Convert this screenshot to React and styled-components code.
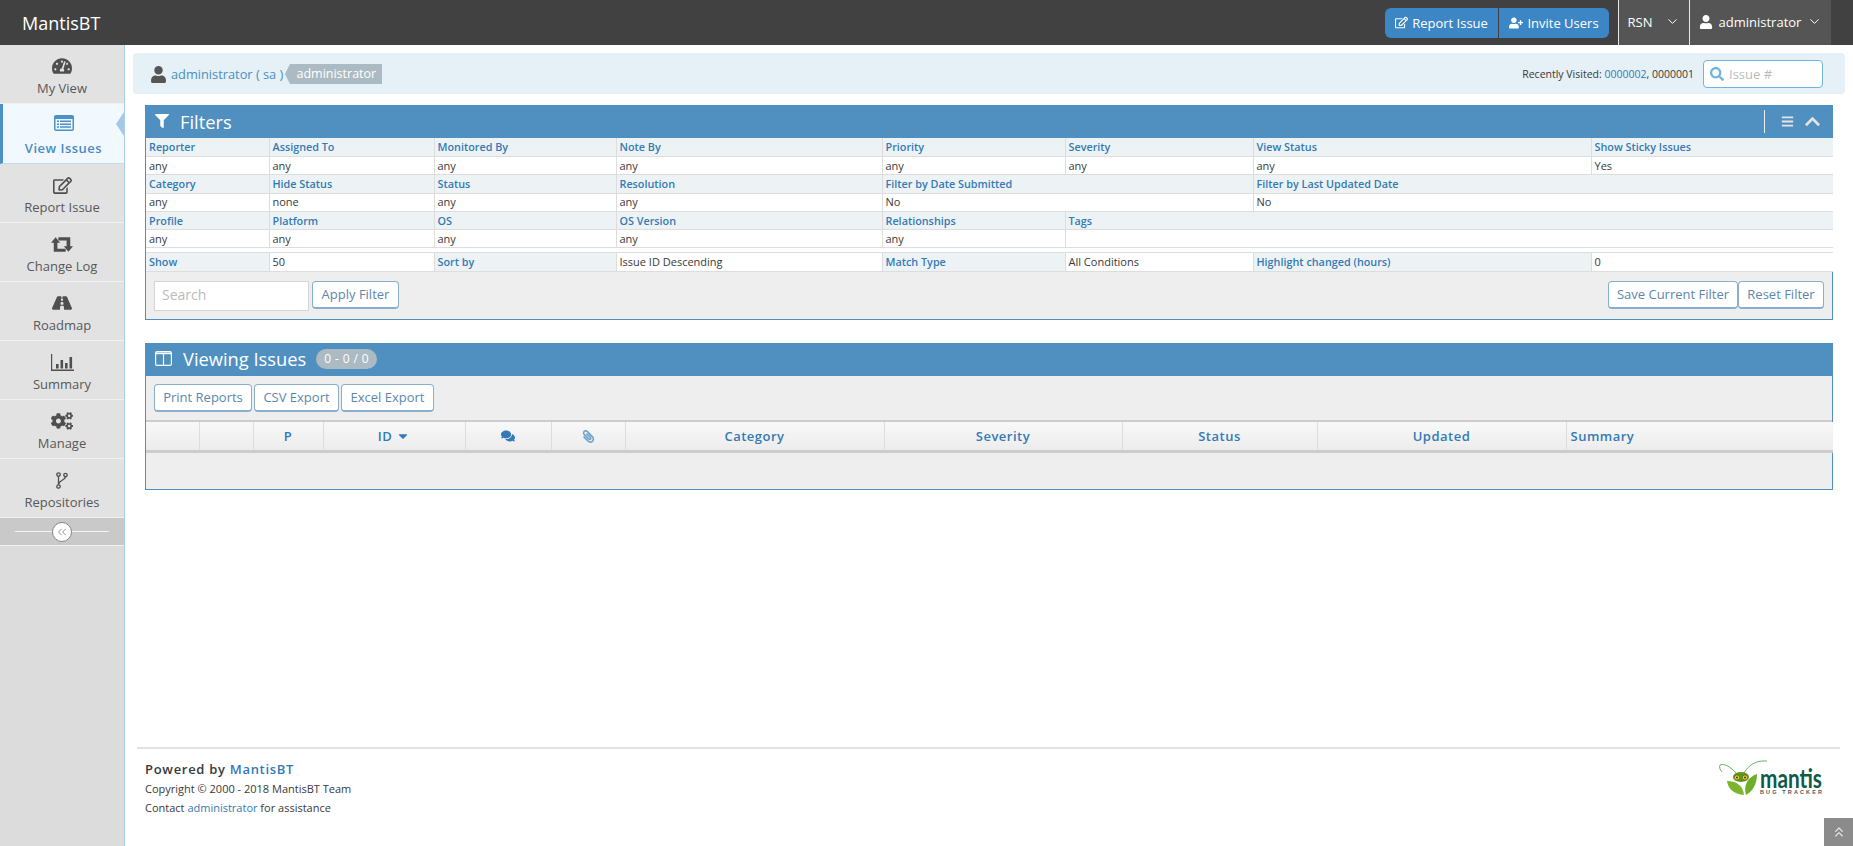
import React from "react";
import styled, { createGlobalStyle } from "styled-components";
import {
  FaTachometerAlt,
  FaRegEdit,
  FaRoad,
  FaCogs,
  FaUser,
  FaFilter,
  FaBars,
  FaChevronUp,
  FaSearch,
  FaUserPlus,
  FaCaretDown,
  FaComments,
  FaPaperclip,
} from "react-icons/fa";
import { ChevronDown, ChevronsLeft, ChevronsUp } from "lucide-react";

const Global = createGlobalStyle`
  html, body {
    margin: 0;
    height: 100%;
    overflow: hidden;
    background: #fff;
    font-family: "Open Sans", "Liberation Sans", sans-serif;
    font-size: 13px;
    color: #393939;
  }
  * { box-sizing: border-box; }
  a { color: #337ab7; text-decoration: none; }
`;

const Navbar = styled.header`
  height: 45px;
  background: #414141;
  display: flex;
  align-items: center;
  padding-right: 22px;
`;

const Brand = styled.div`
  margin-left: 22px;
  color: #fff;
  font-size: 18px;
  margin-right: auto;
`;

const NavGroup = styled.div`
  display: flex;
  gap: 1px;
  margin-right: 9px;
`;

const NavButton = styled.button`
  height: 30px;
  width: ${(p) => p.$w}px;
  border: 0;
  padding: 0;
  background: #3d86c6;
  color: #fff;
  font: 13px "Open Sans", sans-serif;
  display: flex;
  align-items: center;
  justify-content: center;
  gap: 4px;
  border-radius: ${(p) => (p.$left ? "6px 0 0 6px" : "0 6px 6px 0")};
`;

const NavItem = styled.div`
  height: 45px;
  width: ${(p) => p.$w}px;
  background: #555;
  border-left: 1px solid #e8e8e8;
  color: #fff;
  display: flex;
  align-items: center;
  justify-content: center;
  gap: ${(p) => p.$gap}px;
  padding-bottom: 2px;
`;

const Layout = styled.div`
  display: flex;
  height: calc(100vh - 45px);
`;

const Sidebar = styled.nav`
  width: 125px;
  flex: none;
  background: #dcdcdc;
  border-right: 1px solid #a8cbe6;
`;

const MenuItem = styled.a`
  position: relative;
  display: flex;
  flex-direction: column;
  align-items: center;
  height: ${(p) => (p.$active ? 60 : 59)}px;
  padding-top: ${(p) => (p.$active ? 9 : 11)}px;
  background: ${(p) => (p.$active ? "#f1f9ff" : "#e2e2e2")};
  border-bottom: 1px solid ${(p) => (p.$active ? "#c4dced" : "#f0f0f0")};
  border-left: ${(p) => (p.$active ? "3px solid #4c90c6" : "0")};
  color: ${(p) => (p.$active ? "#4b8ac0" : "#585858")};
  font-weight: ${(p) => (p.$active ? 600 : 400)};
  letter-spacing: ${(p) => (p.$active ? 0.5 : 0)}px;
  font-size: 13px;
  line-height: 18px;

  ${(p) =>
    p.$active &&
    `&::after {
      content: "";
      position: absolute;
      right: 0;
      top: 8px;
      border: 12px solid transparent;
      border-left: 0;
      border-right: 8px solid #a5c9e4;
    }`}
`;

const MenuIcon = styled.span`
  height: 20px;
  margin-bottom: ${(p) => (p.$active ? 6 : 3)}px;
  display: flex;
  align-items: center;
  color: ${(p) => (p.$active ? "#4c90c6" : "#4f4f4f")};
`;

const Collapse = styled.div`
  height: 28px;
  background: #c9c9c9;
  border-bottom: 1px solid #f0f0f0;
  display: flex;
  align-items: center;
  justify-content: center;
  position: relative;

  &::before {
    content: "";
    position: absolute;
    left: 15px;
    right: 15px;
    top: 13px;
    border-top: 1px solid #f4f4f4;
  }
`;

const CollapseButton = styled.span`
  position: relative;
  width: 20px;
  height: 20px;
  border-radius: 50%;
  background: #fff;
  border: 1px solid #888;
  color: #777;
  display: flex;
  align-items: center;
  justify-content: center;
`;

const Content = styled.main`
  flex: 1;
  min-width: 0;
  display: flex;
  flex-direction: column;
`;

const Breadcrumbs = styled.div`
  height: 41px;
  margin: 8px 8px 0;
  background: #e5f0f7;
  border-radius: 4px;
  display: flex;
  align-items: center;
  padding: 0 22px 0 17px;
`;

const CrumbUser = styled.a`
  display: flex;
  align-items: center;
  gap: 4px;
  color: #4c8fbd;
  font-size: 12.8px;
  svg { color: #555; font-size: 17px; margin-top: 1px; }
`;

const RoleLabel = styled.span`
  position: relative;
  margin-left: 7px;
  margin-right: auto;
  height: 20px;
  width: 92px;
  background: #abbac3;
  color: #fff;
  font-size: 12.5px;
  display: flex;
  align-items: center;
  justify-content: center;

  &::before {
    content: "";
    position: absolute;
    left: -5px;
    top: 0;
    border: 10px solid transparent;
    border-left: 0;
    border-right: 5px solid #abbac3;
  }
`;

const Recent = styled.span`
  font-size: 10.5px;
  margin-right: 9px;
`;

const IssueBox = styled.label`
  width: 120px;
  height: 28px;
  background: #fff;
  border: 1px solid #6fb3e0;
  border-radius: 4px;
  display: flex;
  align-items: center;
  gap: 5px;
  padding-left: 6px;
  color: #6fb3e0;
`;

const IssueInput = styled.input`
  border: 0;
  outline: 0;
  padding: 0;
  width: 80px;
  font: 13px "Open Sans", sans-serif;
  &::placeholder { color: #bbb; opacity: 1; }
`;

const Page = styled.div`
  padding: 11px 20px 0;
  display: flex;
  flex-direction: column;
  gap: 23px;
`;

const Widget = styled.section`
  border: 1px solid #5090c1;
  background: #eee;
`;

const WidgetHead = styled.div`
  height: 32px;
  margin: 0 -1px;
  background: #5090c1;
  color: #fff;
  display: flex;
  align-items: center;
  padding: 0 0 2px 10px;
  font-size: 18.3px;
`;

const HeadTitle = styled.span`
  margin-left: 11px;
`;

const HeadTools = styled.div`
  margin-left: auto;
  height: 23px;
  border-left: 1px solid #e8eff5;
  display: flex;
  align-items: center;
  gap: 10px;
  padding: 0 12px 0 16px;
  color: #e4e4e4;
`;

const Count = styled.span`
  margin-left: 10px;
  height: 20px;
  width: 61px;
  border-radius: 10px;
  background: #abbac3;
  font-size: 12px;
  letter-spacing: 0.4px;
  display: flex;
  align-items: center;
  justify-content: center;
`;

const FilterTable = styled.table`
  width: 100%;
  table-layout: fixed;
  border-collapse: collapse;
  font-size: 11px;
  line-height: 14px;
  background: #fff;
  border-bottom: 1px solid #ccc;
`;

const FilterLabel = styled.td`
  height: ${(p) => p.$h || 18}px;
  padding: ${(p) => (p.$nudge ? 1 : 0)}px 3px 0;
  background: #edf3f4;
  border: 1px solid #ddd;
  border-top: 0;
  color: #337ab7;
  font-size: 10.8px;
  font-weight: 600;
  white-space: nowrap;
  &:first-child { border-left: 0; }
  &:last-child { border-right: 0; }
`;

const FilterValue = styled.td`
  height: 18px;
  padding: ${(p) => (p.$nudge ? 1 : 0)}px 3px 0;
  background: #fff;
  border: 1px solid #ddd;
  border-top: 0;
  color: #393939;
  white-space: nowrap;
  &:first-child { border-left: 0; }
  &:last-child { border-right: 0; }
`;

const Spacer = styled.td`
  height: 5px;
  padding: 0;
  border-bottom: 1px solid #ddd;
`;

const FilterBar = styled.div`
  height: 47px;
  display: flex;
  align-items: flex-start;
  padding: 9px 8px 0;
`;

const SearchInput = styled.input`
  width: 155px;
  height: 30px;
  margin-right: 3px;
  border: 1px solid #d5d5d5;
  outline: 0;
  padding: 0 7px 2px;
  color: #858585;
  font: 14px "Open Sans", sans-serif;
  &::placeholder { color: #bbb; opacity: 1; }
`;

const Btn = styled.button`
  height: 28px;
  width: ${(p) => p.$w}px;
  flex: none;
  padding: 0;
  background: #fff;
  border: 1px solid #8aafce;
  border-bottom-width: 2px;
  border-radius: 4px;
  color: #5b87ad;
  font: 13px "Open Sans", sans-serif;
`;

const Push = styled.span`
  margin-left: auto;
`;

const ExportBar = styled.div`
  height: 46px;
  display: flex;
  align-items: flex-start;
  gap: 2px;
  padding: 8px 8px 0;
  border-bottom: 2px solid #ccc;
`;

const IssueTable = styled.table`
  width: 100%;
  table-layout: fixed;
  border-collapse: collapse;
  border-bottom: 3px solid #ccc;
`;

const HeadCell = styled.th`
  height: 30px;
  padding: 0 ${(p) => (p.$left ? 4 : 0)}px;
  background: linear-gradient(#f8f8f8, #ececec);
  border-right: 1px solid #ddd;
  border-bottom: 2px solid #e0e0e0;
  color: #337ab7;
  font-size: 13px;
  font-weight: 600;
  letter-spacing: 0.5px;
  text-align: ${(p) => (p.$left ? "left" : "center")};
  &:last-child { border-right: 0; }
  svg { vertical-align: -2px; }
`;

const ClipIcon = styled(FaPaperclip)`
  color: #6fa3cf;
  transform: scaleX(-1);
`;

const EmptyBody = styled.div`
  height: 36px;
`;

const Footer = styled.footer`
  margin: auto 13px 0 12px;
  height: 99px;
  border-top: 2px solid #e2e2e2;
  padding: 10px 8px 0;
  display: flex;
  justify-content: space-between;
`;

const FooterText = styled.div`
  font-size: 11px;
  line-height: 19px;
`;

const Powered = styled.div`
  font-size: 13px;
  font-weight: 600;
  letter-spacing: 0.7px;
  line-height: 20px;
`;

const Logo = styled.svg`
  width: 105px;
  height: 40px;
  margin: 1px 8px 0 0;
  overflow: visible;
`;

const ScrollTop = styled.a`
  position: fixed;
  right: 0;
  bottom: 0;
  width: 29px;
  height: 28px;
  background: #8b8b8b;
  color: #e4eef6;
  display: flex;
  align-items: center;
  justify-content: center;
`;

const ListIcon = () => (
  <svg viewBox="0 0 20 16" width="20" height="16">
    <rect width="20" height="16" rx="2" fill="currentColor" />
    <rect x="1.5" y="4" width="17" height="10.5" fill="#eaf5fd" />
    <path d="M3 5.5h2v1.6H3zM3 8.4h2V10H3zM3 11.2h2v1.6H3zM6 5.5h11v1.6H6zM6 8.4h11V10H6zM6 11.2h11v1.6H6z" fill="currentColor" />
  </svg>
);

const RetweetIcon = () => (
  <svg viewBox="0 0 24 16" width="22" height="15" fill="currentColor">
    <path d="M5 0l5 6H7v6.5h9V16H3V6H0z" />
    <path d="M19 16l-5-6h3V3.5H8V0h13v10h3z" />
  </svg>
);

// fa5 chart-bar is horizontal, the reference one stands up
const ChartIcon = () => (
  <svg viewBox="0 0 23 17" width="23" height="17" fill="currentColor">
    <path d="M0 0h1.2v15.6H23V17H0z" />
    <path d="M5 10h2.6v4.5H5zM9.5 6h2.6v8.5H9.5zM14 9h2.6v5.5H14zM18.5 3h2.6v11.5h-2.6z" />
  </svg>
);

const BranchIcon = () => (
  <svg viewBox="0 0 12 17" width="12" height="17" fill="none" stroke="currentColor" strokeWidth="1.3">
    <circle cx="2.5" cy="2.5" r="1.7" />
    <circle cx="9.5" cy="3" r="1.7" />
    <circle cx="2.5" cy="14.5" r="1.7" />
    <path d="M2.5 4.2v8.6M9.5 4.7C9.5 8 3.5 8 2.8 12" />
  </svg>
);

const ColumnsIcon = () => (
  <svg viewBox="0 0 17 15" width="17" height="15" fill="none" stroke="currentColor">
    <rect x="0.6" y="0.6" width="15.8" height="13.8" rx="1.5" strokeWidth="1.2" />
    <path d="M8.5 2v12" strokeWidth="1.2" />
    <path d="M1 2.4h15" strokeWidth="1.6" />
  </svg>
);

const MantisLogo = () => (
  <Logo viewBox="0 0 105 40">
    <path d="M17 13C12 7 5 3 1 5c-1 2 0 5 2 7" fill="none" stroke="#3f9a4a" strokeWidth="0.8" />
    <path d="M25 13C29 6 36 0 48 1" fill="none" stroke="#3f9a4a" strokeWidth="0.8" />
    <path d="M8 21C18 21 24 26 25 35C15 34 9 29 8 21Z" fill="#7ab52d" />
    <path d="M38 14C38 24 34 31 27 35C24 25 29 17 38 14Z" fill="#6fae2a" />
    <ellipse cx="22" cy="17" rx="8" ry="5" fill="#5b9a1f" />
    <circle cx="18" cy="17.5" r="2.6" fill="#f2d90f" stroke="#333" strokeWidth="0.5" />
    <circle cx="26" cy="17.5" r="2.6" fill="#f2d90f" stroke="#333" strokeWidth="0.5" />
    <circle cx="18" cy="17.5" r="0.9" fill="#222" />
    <circle cx="26" cy="17.5" r="0.9" fill="#222" />
    <text x="41" y="28" fontFamily="Lato, sans-serif" fontWeight="700" fontSize="27" fill="#0f5a47" textLength="62" lengthAdjust="spacingAndGlyphs">
      mantis
    </text>
    <text x="41" y="33.5" fontFamily="Liberation Sans, sans-serif" fontWeight="700" fontSize="5.5" fill="#555" textLength="62">
      BUG TRACKER
    </text>
  </Logo>
);

const MENU = [
  { label: "My View", icon: <FaTachometerAlt size={20} /> },
  { label: "View Issues", icon: <ListIcon />, active: true },
  { label: "Report Issue", icon: <FaRegEdit size={19} /> },
  { label: "Change Log", icon: <RetweetIcon /> },
  { label: "Roadmap", icon: <FaRoad size={20} /> },
  { label: "Summary", icon: <ChartIcon /> },
  { label: "Manage", icon: <FaCogs size={22} /> },
  { label: "Repositories", icon: <BranchIcon /> },
];

const FILTER_COLS = [123, 165, 182, 266, 183, 188, 338, 242];

// [text, colSpan]
const FILTER_ROWS = [
  {
    labels: [["Reporter"], ["Assigned To"], ["Monitored By"], ["Note By"], ["Priority"], ["Severity"], ["View Status"], ["Show Sticky Issues"]],
    values: [["any"], ["any"], ["any"], ["any"], ["any"], ["any"], ["any"], ["Yes"]],
    nudge: true,
  },
  {
    labels: [["Category"], ["Hide Status"], ["Status"], ["Resolution"], ["Filter by Date Submitted", 2], ["Filter by Last Updated Date", 2]],
    values: [["any"], ["none"], ["any"], ["any"], ["No", 2], ["No", 2]],
    tall: true,
  },
  {
    labels: [["Profile"], ["Platform"], ["OS"], ["OS Version"], ["Relationships"], ["Tags", 3]],
    values: [["any"], ["any"], ["any"], ["any"], ["any"], ["", 3]],
    nudge: true,
  },
];

const ISSUE_COLS = [53, 54, 70, 142, 86, 74, 259, 238, 195, 249, 267];

const Filters = () => (
  <Widget>
    <WidgetHead>
      <FaFilter size={14} />
      <HeadTitle>Filters</HeadTitle>
      <HeadTools>
        <FaBars size={13} />
        <FaChevronUp size={17} />
      </HeadTools>
    </WidgetHead>
    <FilterTable>
      <colgroup>
        {FILTER_COLS.map((w, i) => (
          <col key={i} style={{ width: w }} />
        ))}
      </colgroup>
      <tbody>
        {FILTER_ROWS.map((row, r) => (
          <React.Fragment key={r}>
            <tr>
              {row.labels.map(([text, span], i) => (
                <FilterLabel key={i} colSpan={span} $h={row.tall ? 19 : 18} $nudge={row.nudge}>
                  {text}
                </FilterLabel>
              ))}
            </tr>
            <tr>
              {row.values.map(([text, span], i) => (
                <FilterValue key={i} colSpan={span} $nudge={row.nudge}>
                  {text}
                </FilterValue>
              ))}
            </tr>
          </React.Fragment>
        ))}
        <tr>
          <Spacer colSpan={8} />
        </tr>
        <tr>
          <FilterLabel $h={19}>Show</FilterLabel>
          <FilterValue>50</FilterValue>
          <FilterLabel $h={19}>Sort by</FilterLabel>
          <FilterValue>Issue ID Descending</FilterValue>
          <FilterLabel $h={19}>Match Type</FilterLabel>
          <FilterValue>All Conditions</FilterValue>
          <FilterLabel $h={19}>Highlight changed (hours)</FilterLabel>
          <FilterValue>0</FilterValue>
        </tr>
      </tbody>
    </FilterTable>
    <FilterBar>
      <SearchInput placeholder="Search" />
      <Btn $w={87}>Apply Filter</Btn>
      <Push />
      <Btn $w={130}>Save Current Filter</Btn>
      <Btn $w={86}>Reset Filter</Btn>
    </FilterBar>
  </Widget>
);

const Issues = () => (
  <Widget>
    <WidgetHead>
      <ColumnsIcon />
      <HeadTitle>Viewing Issues</HeadTitle>
      <Count>0 - 0 / 0</Count>
    </WidgetHead>
    <ExportBar>
      <Btn $w={98}>Print Reports</Btn>
      <Btn $w={85}>CSV Export</Btn>
      <Btn $w={93}>Excel Export</Btn>
    </ExportBar>
    <IssueTable>
      <colgroup>
        {ISSUE_COLS.map((w, i) => (
          <col key={i} style={{ width: w }} />
        ))}
      </colgroup>
      <thead>
        <tr>
          <HeadCell />
          <HeadCell />
          <HeadCell>P</HeadCell>
          <HeadCell>
            ID <FaCaretDown size={14} />
          </HeadCell>
          <HeadCell>
            <FaComments size={14} />
          </HeadCell>
          <HeadCell>
            <ClipIcon size={13} />
          </HeadCell>
          <HeadCell>Category</HeadCell>
          <HeadCell>Severity</HeadCell>
          <HeadCell>Status</HeadCell>
          <HeadCell>Updated</HeadCell>
          <HeadCell $left>Summary</HeadCell>
        </tr>
      </thead>
    </IssueTable>
    <EmptyBody />
  </Widget>
);

export default function App() {
  return (
    <>
      <Global />
      <Navbar>
        <Brand>MantisBT</Brand>
        <NavGroup>
          <NavButton $left $w={113}>
            <FaRegEdit size={13} /> Report Issue
          </NavButton>
          <NavButton $w={110}>
            <FaUserPlus size={14} /> Invite Users
          </NavButton>
        </NavGroup>
        <NavItem $w={71} $gap={13}>
          RSN <ChevronDown size={15} strokeWidth={1.6} />
        </NavItem>
        <NavItem $w={142} $gap={6}>
          <FaUser size={14} /> administrator <ChevronDown size={15} strokeWidth={1.6} />
        </NavItem>
      </Navbar>
      <Layout>
        <Sidebar>
          {MENU.map((m) => (
            <MenuItem key={m.label} $active={m.active}>
              <MenuIcon $active={m.active}>{m.icon}</MenuIcon>
              {m.label}
            </MenuItem>
          ))}
          <Collapse>
            <CollapseButton>
              <ChevronsLeft size={14} strokeWidth={1.4} />
            </CollapseButton>
          </Collapse>
        </Sidebar>
        <Content>
          <Breadcrumbs>
            <CrumbUser>
              <FaUser />
              administrator ( sa )
            </CrumbUser>
            <RoleLabel>administrator</RoleLabel>
            <Recent>
              Recently Visited: <a>0000002</a>, 0000001
            </Recent>
            <IssueBox>
              <FaSearch size={14} />
              <IssueInput placeholder="Issue #" />
            </IssueBox>
          </Breadcrumbs>
          <Page>
            <Filters />
            <Issues />
          </Page>
          <Footer>
            <FooterText>
              <Powered>
                Powered by <a>MantisBT</a>
              </Powered>
              <div>Copyright © 2000 - 2018 MantisBT Team</div>
              <div>
                Contact <a>administrator</a> for assistance
              </div>
            </FooterText>
            <MantisLogo />
          </Footer>
        </Content>
      </Layout>
      <ScrollTop>
        <ChevronsUp size={16} strokeWidth={1.6} />
      </ScrollTop>
    </>
  );
}
